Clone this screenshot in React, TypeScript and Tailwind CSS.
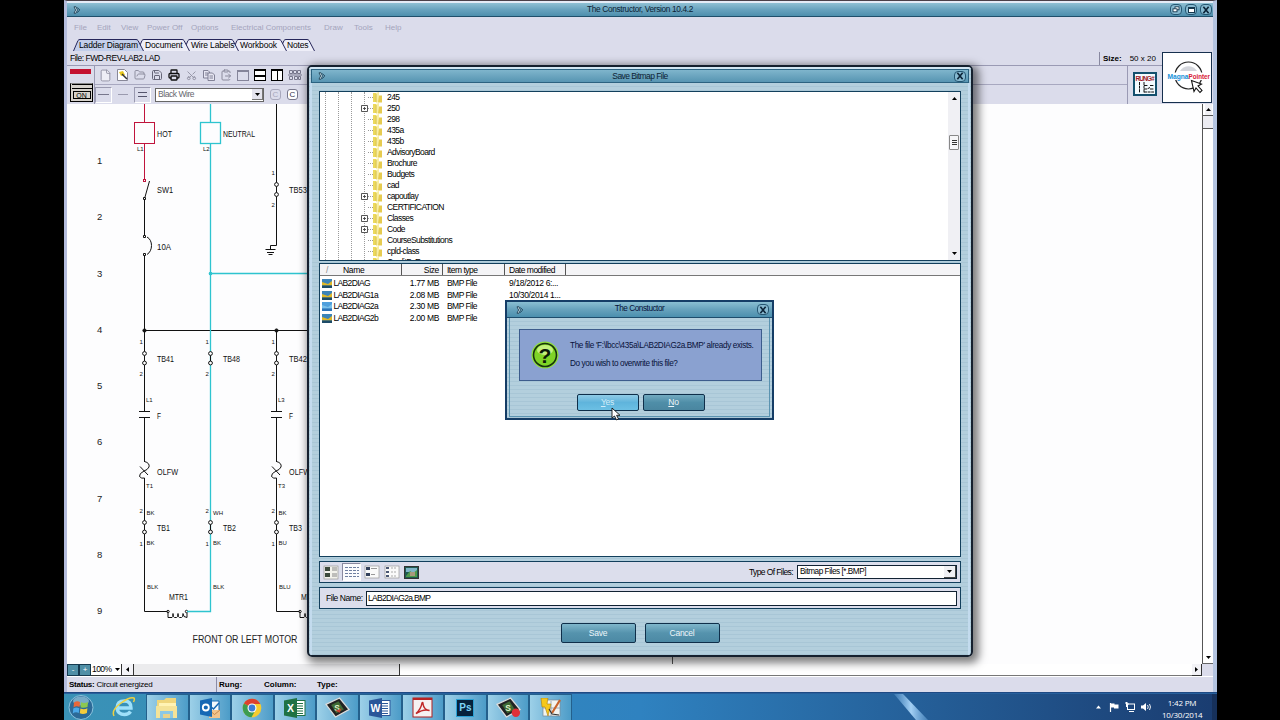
import React from 'react';
import { Copy, ClipboardPaste, FolderOpen, Printer, Save, Scissors, File } from 'lucide-react';

const MENU = [
  { label: 'File', cls: 'w-[23px]' },
  { label: 'Edit', cls: 'w-[24px]' },
  { label: 'View', cls: 'w-[26px]' },
  { label: 'Power Off', cls: 'w-[44px]' },
  { label: 'Options', cls: 'w-[40px]' },
  { label: 'Electrical Components', cls: 'w-[93px]' },
  { label: 'Draw', cls: 'w-[30px]' },
  { label: 'Tools', cls: 'w-[31px]' },
  { label: 'Help', cls: 'w-[30px]' },
];

const TABS = [
  { label: 'Ladder Diagram', w: 71, cls: 'w-[69px] z-5' },
  { label: 'Document', w: 53, cls: 'w-[46px] z-4' },
  { label: 'Wire Labels', w: 56, cls: 'w-[49px] z-3' },
  { label: 'Workbook', w: 55, cls: 'w-[47px] z-2' },
  { label: 'Notes', w: 36, cls: 'w-[31px] z-1' },
];

const FOLDERS = [
  { name: '245' },
  { name: '250', plus: true },
  { name: '298' },
  { name: '435a' },
  { name: '435b' },
  { name: 'AdvisoryBoard' },
  { name: 'Brochure' },
  { name: 'Budgets' },
  { name: 'cad' },
  { name: 'capoutlay', plus: true },
  { name: 'CERTIFICATION' },
  { name: 'Classes', plus: true },
  { name: 'Code', plus: true },
  { name: 'CourseSubstitutions' },
  { name: 'cpld-class' },
  { name: 'CreditByExam' },
];

const FILES = [
  { name: 'LAB2DIAG', size: '1.77 MB', date: '9/18/2012 6:...' },
  { name: 'LAB2DIAG1a', size: '2.08 MB', date: '10/30/2014 1...' },
  { name: 'LAB2DIAG2a', size: '2.30 MB', date: '', selected: true },
  { name: 'LAB2DIAG2b', size: '2.00 MB', date: '' },
];

const Chevrons = () => (
  <svg width="8" height="8" viewBox="0 0 8 8" fill="#d8ecf4" stroke="#1d3f55" strokeWidth="0.9">
    <path d="M1 .8 L3 .8 L4.4 4 L3 7.2 L1 7.2 L2.6 4Z" />
    <path d="M4.2 1.4 L6.8 4 L4.2 6.6" fill="none" />
  </svg>
);

const CloseButton = () => (
  <div className="w-[12px] h-[11px] rounded-[4px] border border-[#245672] bg-[#86b9d0] flex items-center justify-center">
    <svg width="8" height="8" viewBox="0 0 7 7" stroke="#0c2438" strokeWidth="1.4">
      <path d="M1.2 .6 L5.8 6.4 M5.8 .6 L1.2 6.4" />
    </svg>
  </div>
);

const Arrow = ({ dir }: { dir: 'up' | 'down' | 'left' | 'right' }) => {
  const d = {
    up: 'M1 5 L3.5 2 L6 5Z',
    down: 'M1 2 L3.5 5 L6 2Z',
    left: 'M5 1 L2 3.5 L5 6Z',
    right: 'M2 1 L5 3.5 L2 6Z',
  }[dir];
  return <svg width="7" height="7" viewBox="0 0 7 7" className="shrink-0"><path d={d} fill="#000" /></svg>;
};

const TitleBar = () => (
  <div className="h-[14px] shrink-0 flex items-center bg-linear-to-b from-[#8fc0d4] via-[#69a3be] to-[#4d8fad] border-b border-[#1f4f6b] text-[#0c2233]">
    <div className="w-[43px] pl-[6px]"><Chevrons /></div>
    <div className="flex-1 text-center text-[8.3px] tracking-[-0.35px]">The Constructor, Version 10.4.2</div>
    <div className="w-[43px] flex gap-[3px]">
      <div className="w-[12px] h-[11px] rounded-[4px] border border-[#245672] bg-[#86b9d0] flex items-center justify-center">
        <svg width="8" height="7" viewBox="0 0 8 7" fill="#fff" stroke="#16384e" strokeWidth="0.9">
          <rect x="3" y="0.8" width="4" height="3" /><rect x="1" y="2.8" width="4" height="3" />
        </svg>
      </div>
      <div className="w-[12px] h-[11px] rounded-[4px] border border-[#245672] bg-[#86b9d0] flex items-center justify-center">
        <div className="w-[7px] h-[6px] bg-white border border-t-2 border-[#16384e]"></div>
      </div>
      <CloseButton />
    </div>
  </div>
);

const TabStrip = () => (
  <div className="h-[14px] flex pl-[6px] text-[8.5px] tracking-[-0.15px] text-black isolate">
    {TABS.map((tab, i) => (
      <div key={tab.label} className={`${tab.cls} relative h-[14px]`}>
        <svg width={tab.w} height="13" className={`absolute top-0 ${i === 0 ? 'left-0' : '-left-[5px]'}`}>
          <path
            d={`M0.5 13 L5 2.5 Q5.6 1.5 7 1.5 H${tab.w - 8} Q${tab.w - 6.6} 1.5 ${tab.w - 6} 2.5 L${tab.w - 0.5} 13`}
            fill={i === 0 ? '#c3cfeb' : '#eeeef8'}
            stroke="#26265a"
          />
        </svg>
        <span className={`relative block whitespace-nowrap leading-[14px] ${i === 0 ? 'pl-[6px]' : 'pl-[3px]'}`}>{tab.label}</span>
      </div>
    ))}
  </div>
);

const ToolCell = ({ children }: { children?: React.ReactNode }) => (
  <div className="w-[17.2px] h-[18px] flex items-center justify-center text-[#8a8a9c]">{children}</div>
);

const Toolbar = () => (
  <div className="h-[39px] flex border-t border-[#9a9ab4]">
    <div className="w-[28px] border-r border-[#9a9ab4] pl-[3px] pt-[3px]">
      <div className="w-[21px] h-[5px] bg-[#c41230]"></div>
      <div className="mt-[9px] w-[23px] h-[19px] bg-[#d6d2cc] border border-black border-t-[#888] flex flex-col items-center">
        <div className="w-[20px] h-[5px] border-b border-black border-t"></div>
        <div className="mt-[2px] w-[18px] h-[8px] border border-black text-[7px] leading-[7px] text-center">ON</div>
      </div>
    </div>
    <div className="flex-1">
      <div className="h-[19px] flex items-center pl-[2px] border-b border-[#a8a8c0]">
        <ToolCell><File size={13} strokeWidth={1.6} fill="#eeeef6" /></ToolCell>
        <ToolCell>
          <svg width="11" height="12" viewBox="0 0 11 12">
            <path d="M.5 .5 H7.5 L10.5 3.5 V11.5 H.5Z" fill="#fff" stroke="#888898" />
            <path d="M2 3 L6 2 L8 6 L4 7Z" fill="#e8c81e" />
            <path d="M5 5 L10 10" stroke="#333" strokeWidth="1.5" />
          </svg>
        </ToolCell>
        <ToolCell><FolderOpen size={12} strokeWidth={1.9} /></ToolCell>
        <ToolCell><Save size={12} strokeWidth={2} color="#666678" /></ToolCell>
        <ToolCell><Printer size={12} strokeWidth={2.6} color="#111" /></ToolCell>
        <ToolCell><Scissors size={11} strokeWidth={1.8} className="-rotate-90" /></ToolCell>
        <ToolCell>
          <svg width="12" height="11" viewBox="0 0 12 11" fill="#e6e6f2" stroke="#77778c" strokeWidth="0.9">
            <path d="M.5 .5 H5 L6.500 2 V8 H.500Z M2 3h3 M2 5h3" />
            <path d="M5 3 H9.500 L11.500 5 V10.500 H5Z M6.500 6h3.500 M6.500 8h3.500" />
          </svg>
        </ToolCell>
        <ToolCell><ClipboardPaste size={12} strokeWidth={2} /></ToolCell>
        <ToolCell><div className="w-[12px] h-[11px] border border-[#85859a] border-t-2"></div></ToolCell>
        <ToolCell>
          <div className="w-[12px] h-[12px] border border-black border-t-2 bg-white flex items-center"><div className="w-full h-[2px] bg-black"></div></div>
        </ToolCell>
        <ToolCell>
          <div className="w-[12px] h-[12px] border border-black border-t-2 bg-white flex justify-center"><div className="w-px h-full bg-black"></div></div>
        </ToolCell>
        <ToolCell>
          <svg width="14" height="12" viewBox="0 0 14 12" fill="none" stroke="#77778c">
            <path d="M1.5 1.5h3v3h-3z M5.5 1.5h3v3h-3z M9.5 1.5h3v3h-3z M1.5 7.5h3v3h-3z M6.5 7.5h3v3h-3z M10.5 7.5h2v3h-2z M0 6h14" />
          </svg>
        </ToolCell>
      </div>
      <div className="h-[19px] flex items-center">
        <div className="w-[17px] h-[16px] border border-[#9a9ab0] border-r-white border-b-white flex items-center justify-center"><div className="w-[11px] h-px bg-[#77778c]"></div></div>
        <div className="w-[22px] flex pl-[6px]"><div className="w-[10px] h-px bg-[#9a9aae]"></div></div>
        <div className="w-[17px] h-[16px] border border-[#9a9ab0] border-r-white border-b-white flex flex-col gap-[3px] items-center justify-center">
          <div className="w-[9px] h-px bg-[#55556c]"></div>
          <div className="w-[9px] h-px bg-[#55556c]"></div>
        </div>
        <div className="ml-[4px] w-[109px] h-[14px] bg-white border border-[#666] flex items-center justify-between text-[8.5px] tracking-[-0.45px] text-[#66666e] pl-[2px]">
          <span>Black Wire</span>
          <div className="w-[11px] h-[11px] bg-[#e4e4ee] border-r border-b border-[#777] flex items-center justify-center"><Arrow dir="down" /></div>
        </div>
        <div className="ml-[6px] w-[11px] h-[11px] rounded-[3px] border border-[#a8a8bc] text-[#a8a8bc] text-[8px] leading-[9px] text-center">C</div>
        <div className="ml-[6px] w-[11px] h-[11px] rounded-[3px] border border-[#77778c] bg-white text-[#33334c] text-[8px] leading-[9px] text-center">C</div>
      </div>
    </div>
    <div className="w-[35px] border-l border-[#9a9ab4] flex items-start justify-center pt-[6px]">
      <svg width="24" height="24" viewBox="0 0 24 24">
        <rect x="1" y="1" width="22" height="22" fill="#f4fbff" stroke="#14506e" strokeWidth="2" />
        <text x="2.6" y="9" fontSize="6.5" fontWeight="bold" fill="#a01a2c" textLength="19" fontFamily="Liberation Sans">RUNG#</text>
        <path d="M6.5 10 V21 M11 10 V21 M11 13.5 H15 M17 13.5 H21 M11 17 H14 L17 15.5 M17 17 H21 M11 20 H21" stroke="#111" strokeWidth="1" strokeDasharray="3 0.6" fill="none" />
      </svg>
    </div>
  </div>
);

const MagnaPointer = () => (
  <div className="w-[50px] h-[51px] mt-[1px] mr-[1px] bg-white border border-[#16304e]">
    <svg width="48" height="49" viewBox="0 0 48 49">
      <circle cx="25.5" cy="22.5" r="13.5" fill="#fff" stroke="#222" strokeWidth="1.2" />
      <path d="M17 18 A10 10 0 0 1 34 18 Z" fill="#d4d6dc" />
      <rect x="4" y="19.5" width="43" height="7.500" fill="#fff" />
      <text x="4.500" y="26" fontSize="7.2" fontWeight="bold" fontFamily="Liberation Sans" fill="#1590d8" textLength="21" lengthAdjust="spacingAndGlyphs">Magna</text>
      <text x="25.500" y="26" fontSize="7.2" fontWeight="bold" fontFamily="Liberation Sans" fill="#d81834" textLength="21.500" lengthAdjust="spacingAndGlyphs">Pointer</text>
      <path d="M28.5 27.500 L38.5 31 L35 33 L39 37.500 L37 39.500 L33 35 L31 38.500Z" fill="#fff" stroke="#111" strokeWidth="1.1" />
    </svg>
  </div>
);

const Terminal = ({ x, y, gap = 10 }: { x: number; y: number; gap?: number }) => (
  <g fill="#fff" stroke="#111">
    <path d={`M${x} ${y} V${y + gap}`} />
    <circle cx={x} cy={y} r="1.9" />
    <circle cx={x} cy={y + gap} r="1.9" />
  </g>
);

const Overload = ({ x }: { x: number }) => (
  <path
    d={`M${x} 461.5 Q${x + 5.5} 463 ${x + 4.5} 467 Q${x + 3} 470 ${x - 0.5} 471 Q${x - 5.5} 473.5 ${x - 5} 476.5 Q${x - 3} 479 ${x} 478 M${x - 4.5} 466.5 L${x + 3.5} 475`}
    fill="none"
    stroke="#111"
  />
);

const Coil = ({ x }: { x: number }) => (
  <g fill="none" stroke="#111">
    <path d={`M${x} 613 V617.5 H${x + 4} Q${x + 5} 617.5 ${x + 5} 613.5 Q${x + 5} 617.5 ${x + 6.5} 617.5 H${x + 8.5} Q${x + 10} 617.5 ${x + 10} 613.5 Q${x + 10} 617.500 ${x + 11.500} 617.500 H${x + 13.500} Q${x + 15} 617.500 ${x + 15} 613.500 Q${x + 15} 617.500 ${x + 19} 617.500 V613`} />
    <circle cx={x} cy="611.5" r="1.2" />
    <circle cx={x + 18.5} cy="611.5" r="1.2" />
  </g>
);

const Phase = ({ x }: { x: number }) => (
  <g stroke="#111" fill="none">
    <path d={`M${x} 330 V411 M${x - 5.5} 411.5 H${x + 5.5} M${x - 5.5} 417.5 H${x + 5.5} M${x} 418 V462 M${x} 478 V611.5 H${x + 23}`} />
    <circle cx={x} cy="330.5" r="1.6" fill="#111" />
    <Overload x={x} />
    <Terminal x={x} y={353.5} gap={9.5} />
    <Terminal x={x} y={522.5} gap={9.5} />
    <Coil x={x + 23.5} />
  </g>
);

const LABELS: [number, number, string, number][] = [
  [157, 137, 'HOT', 15], [223, 137, 'NEUTRAL', 32], [157, 193, 'SW1', 16], [289, 193, 'TB53', 18],
  [157, 249.5, '10A', 14], [157, 362, 'TB41', 17], [223, 362, 'TB48', 17], [289, 362, 'TB42', 18],
  [157, 418.5, 'F', 4], [289, 418.5, 'F', 4], [157, 475, 'OLFW', 21], [289, 475, 'OLFW', 21],
  [157, 531, 'TB1', 13], [223, 531, 'TB2', 13], [289, 531, 'TB3', 13],
  [169, 599.5, 'MTR1', 19], [301, 599.5, 'MTR2', 19],
];

const SMALL: [number, number, string][] = [
  [137, 150.5, 'L1'], [203, 150.5, 'L2'], [271.5, 174.5, '1'], [271.5, 207, '2'],
  [139.5, 344, '1'], [205.5, 344, '1'], [271.5, 344, '1'],
  [139.5, 376, '2'], [205.5, 376, '2'], [271.5, 376, '2'],
  [146, 402, 'L1'], [278, 402, 'L3'], [146, 488, 'T1'], [278, 488, 'T3'],
  [139.5, 513, '2'], [205.5, 513, '2'], [271.5, 513, '2'],
  [146.5, 515, 'BK'], [213, 515, 'WH'], [278.5, 515, 'BK'],
  [139.5, 545.5, '1'], [205.5, 545.5, '1'], [271.5, 545.5, '1'],
  [146.5, 544.5, 'BK'], [213, 544.5, 'BK'], [278.5, 544.5, 'BU'],
  [147, 588.5, 'BLK'], [213, 588.5, 'BLK'], [279, 588.5, 'BLU'],
];

const Ladder = () => (
  <svg width="1135" height="560" viewBox="67 104 1135 560" className="block" fontFamily="Liberation Sans">
    <g fontSize="9.5" fill="#222">
      {[1, 2, 3, 4, 5, 6, 7, 8, 9].map((n) => (
        <text key={n} x="97" y={107.6 + n * 56.3}>{n}</text>
      ))}
    </g>
    <g fill="none" stroke="#c0143c">
      <path d="M144.5 104 V122.5 M144.5 143.5 V179" />
      <rect x="134.5" y="122.5" width="20" height="21" />
      <rect x="143.5" y="179.5" width="2" height="2" />
    </g>
    <g fill="none" stroke="#111">
      <path d="M149.5 181 L145 197 M144.5 199 V235 M144.5 256 V330 M147 237 C153 240 153 251 147 254.5" />
      <path d="M143.5 197.500h2v2h-2z M143.500 235.500h2v2h-2z M143.500 253.500h2v2h-2z" />
      <path d="M276.500 104 V245.500 H270.500 V249 M265.500 249.500 H275.500 M267 252.500 H274 M268.500 254.500 H272.500" />
      <path d="M144 330.500 H308" />
    </g>
    <Terminal x={276.5} y={184.5} />
    <Phase x={144.5} />
    <Phase x={276.5} />
    <g fill="none" stroke="#2ec4cf" strokeWidth="1.3">
      <path d="M210.500 104 V122.500 M210.500 143.500 V611.500 H187 M210.500 273.500 H308" />
      <rect x="200.500" y="122.500" width="20" height="21" />
      <circle cx="210.500" cy="273.500" r="1.2" fill="#2ec4cf" />
    </g>
    <Terminal x={210.5} y={353.5} gap={9.5} />
    <Terminal x={210.5} y={522.5} gap={9.5} />
    <g fontSize="8.500" fill="#111">
      {LABELS.map(([x, y, s, w]) => (
        <text key={`${x}-${y}`} x={x} y={y} textLength={w} lengthAdjust="spacingAndGlyphs">{s}</text>
      ))}
    </g>
    <g fontSize="6" fill="#111">
      {SMALL.map(([x, y, s]) => (
        <text key={`${x}-${y}`} x={x} y={y}>{s}</text>
      ))}
    </g>
    <text x="192.500" y="642.500" fontSize="10" fill="#222" textLength="105" lengthAdjust="spacingAndGlyphs">FRONT OR LEFT MOTOR</text>
    <path d="M672.500 655 V664" stroke="#555" />
  </svg>
);

const FolderIcon = () => (
  <svg width="9" height="11" viewBox="0 0 9 11" className="shrink-0">
    <path d="M0 1 H4 V10 H0Z" fill="#ecd95c" />
    <path d="M3 1 L6 0 V10 L3 11Z" fill="#f8eea0" />
    <path d="M6 3.500 H9 V10.500 H5Z" fill="#e6cb50" />
    <path d="M3.200 2 V10" stroke="#c8ac3a" strokeWidth="0.6" />
  </svg>
);

const FolderTree = () => (
  <div className="h-[170px] bg-white border border-[#123f5c] flex overflow-hidden shrink-0">
    <div className="w-[6px] border-r border-dotted border-[#9a9a9a]"></div>
    <div className="w-[13px] border-r border-dotted border-[#9a9a9a]"></div>
    <div className="w-[13px] border-r border-dotted border-[#9a9a9a]"></div>
    <div className="w-[13px] border-r border-dotted border-[#9a9a9a]"></div>
    <div className="flex-1 text-[8.500px] text-black">
      {FOLDERS.map((f) => (
        <div key={f.name} className="h-[11px] flex items-center -ml-[4px]">
          <div className="w-[7px] h-[7px] shrink-0 flex">
            {f.plus && (
              <svg width="7" height="7" viewBox="0 0 7 7"><path d="M.5 .5h6v6h-6z M2 3.500h3 M3.500 2v3" fill="#fff" stroke="#444" strokeWidth="0.900" /></svg>
            )}
          </div>
          <div className="w-[5px] border-t border-dotted border-[#999]"></div>
          <FolderIcon />
          <span className="ml-[5px] tracking-[-0.580px] leading-[11px] whitespace-nowrap">{f.name}</span>
        </div>
      ))}
    </div>
    <div className="w-[12px] bg-[#f0f0f4] flex flex-col items-center py-[3px]">
      <Arrow dir="up" />
      <div className="mt-[33px] w-[10px] h-[15px] bg-[#f6f6f8] border border-[#888] rounded-[1px] flex flex-col items-center justify-center gap-px">
        <div className="w-[5px] h-px bg-[#333]"></div>
        <div className="w-[5px] h-px bg-[#333]"></div>
        <div className="w-[5px] h-px bg-[#333]"></div>
      </div>
      <div className="flex-1"></div>
      <Arrow dir="down" />
    </div>
  </div>
);

const FileList = () => (
  <div className="mt-[2px] h-[294px] shrink-0 bg-white border border-[#123f5c] text-[8.500px] tracking-[-0.350px] text-black">
    <div className="h-[12px] flex leading-[12px] bg-[#f4f4f6] border-b border-[#777]">
      <div className="w-[82px] border-r border-[#555] flex"><span className="w-[23px] pl-[6px] text-[#888]">/</span>Name</div>
      <div className="w-[41px] border-r border-[#555] text-right pr-[3px]">Size</div>
      <div className="w-[62px] border-r border-[#555] pl-[4px] tracking-[-0.500px]">Item type</div>
      <div className="w-[61px] border-r border-[#555] pl-[4px] tracking-[-0.500px] whitespace-nowrap">Date modified</div>
    </div>
    <div className="pt-[1.500px]">
      {FILES.map((f) => (
        <div key={f.name} className="h-[11.700px] flex items-center leading-[11px]">
          <div className="w-[82px] flex items-center pl-[2px]">
            <svg width="10" height="9" viewBox="0 0 10 9">
              <rect width="10" height="9" fill={f.selected ? '#4f9fdc' : '#3c84b8'} />
              <path d="M0 3 L6 5 L10 2 V6.500 H0Z" fill={f.selected ? '#7ac0ea' : '#e0b828'} />
              <path d="M0 6.500 H10 V9 H0Z" fill={f.selected ? '#2d74b8' : '#1d4c68'} />
            </svg>
            <span className="ml-[1.500px] tracking-[-0.650px]">{f.name}</span>
          </div>
          <div className="w-[40px] text-right pr-[3px]">{f.size}</div>
          <div className="w-[62px] pl-[5px] tracking-[-0.550px]">BMP File</div>
          <div className="pl-[5px]">{f.date}</div>
        </div>
      ))}
    </div>
  </div>
);

const ViewIcons = () => (
  <div className="flex items-center gap-[2px]">
    <svg width="18" height="16" viewBox="0 0 18 16">
      <rect x="2" y="2" width="14" height="13" fill="#f2f2ec" stroke="#999" strokeWidth="0.700" />
      <path d="M3 3h5v4h-5z M3 9h5v4h-5z" fill="#3c4a3c" />
      <path d="M10 4h5 M10 6h5 M10 10h5 M10 12h5" stroke="#888" />
    </svg>
    <div className="w-[19px] h-[18px] border border-[#8a8aa0] border-r-white border-b-white bg-[#fbfbfd] flex items-center justify-center">
      <svg width="14" height="13" viewBox="0 0 14 13"><path d="M0 1.500h14 M0 4.500h14 M0 7.500h14 M0 10.500h14" stroke="#6f7fa0" strokeDasharray="3 1" /></svg>
    </div>
    <svg width="18" height="16" viewBox="0 0 18 16">
      <rect x="2" y="2" width="14" height="12" fill="#fafafa" stroke="#999" strokeWidth="0.700" />
      <path d="M3 3h4v3h-4z M3 9h4v3h-4z" fill="#33405c" /><path d="M8 4.500h6 M8 10.500h4" stroke="#999" />
    </svg>
    <svg width="18" height="16" viewBox="0 0 18 16">
      <rect x="2" y="2" width="14" height="12" fill="#fafafa" stroke="#999" strokeWidth="0.700" />
      <path d="M3 3h3v2h-3z M3 7h3v2h-3z M3 11h3v2h-3z" fill="#4a5674" /><path d="M8 4h6 M8 8h6 M8 12h6" stroke="#aaa" strokeDasharray="2 1" />
    </svg>
    <svg width="18" height="16" viewBox="0 0 18 16">
      <rect x="1.500" y="2.500" width="14" height="12" fill="#1f5a50" stroke="#333" />
      <rect x="3" y="4" width="11" height="4" fill="#7fb4c8" />
      <path d="M3 12 L7 7 L10 9 L14 6 V13 H3Z" fill="#4e9a4a" />
      <rect x="7" y="8" width="5" height="4" fill="#a89a7c" />
    </svg>
  </div>
);

const DialogButton = ({ children, className }: { children: React.ReactNode; className: string }) => (
  <div className={`border border-[#0f2f4a] rounded-[2px] text-[#eef6fa] text-[8.500px] tracking-[-0.250px] flex items-center justify-center ${className}`}>
    {children}
  </div>
);

const SaveDialog = () => (
  <div className="absolute left-[307px] top-[65px] w-[666px] h-[592px] rounded-[5px] border-2 border-[#15202e] bg-[repeating-linear-gradient(180deg,#b3cfdd_0px,#b3cfdd_3px,#a8c6d6_3px,#a8c6d6_4px)] shadow-[3px_3px_9px_3px_rgba(0,0,0,0.5)] flex flex-col overflow-hidden">
    <div className="h-[2px] bg-[#d2e6f2] shrink-0"></div>
    <div className="mx-[2px] h-[14px] shrink-0 flex items-center border border-[#2b6280] bg-linear-to-b from-[#7fb5cc] to-[#5795b2] text-[#0c2233]">
      <div className="w-[30px] pl-[6px]"><Chevrons /></div>
      <div className="flex-1 text-center text-[8.500px] tracking-[-0.550px]">Save Bitmap File</div>
      <div className="w-[30px] flex justify-end pr-[2px]"><CloseButton /></div>
    </div>
    <div className="flex-1 mx-[1px] border-x-2 border-[#c3dbee] px-[7px] pt-[8px] flex flex-col">
      <FolderTree />
      <FileList />
      <div className="mt-[4px] h-[22px] shrink-0 border border-[#123f5c] bg-[#dcdeec] flex items-center justify-between pl-[2px] pr-[3px] text-[8.500px] tracking-[-0.600px]">
        <ViewIcons />
        <div className="flex items-center gap-[4px]">
          <span>Type Of Files:</span>
          <div className="w-[160px] h-[14px] border border-[#123] bg-white flex items-center justify-between pl-[2px] text-[8.200px] tracking-[-0.450px]">
            <span>Bitmap Files [*.BMP]</span>
            <div className="w-[12px] h-[12px] bg-[#f0f0f4] border-r border-b border-[#444] flex items-center justify-center"><Arrow dir="down" /></div>
          </div>
        </div>
      </div>
      <div className="mt-[4px] h-[22px] shrink-0 border border-[#123f5c] bg-[#dcdeec] flex items-center pl-[6px] pr-[3px] text-[8.500px] tracking-[-0.450px]">
        <span className="w-[40px]">File Name:</span>
        <div className="flex-1 h-[15px] border border-[#123] bg-white flex items-center pl-[1px] tracking-[-0.680px]">LAB2DIAG2a.BMP</div>
      </div>
      <div className="mt-[14px] flex gap-[9px] justify-center">
        <DialogButton className="w-[75px] h-[20px] bg-linear-to-b from-[#7fb6cb] via-[#5593ad] to-[#4c89a4]">Save</DialogButton>
        <DialogButton className="w-[75px] h-[20px] bg-linear-to-b from-[#7fb6cb] via-[#5593ad] to-[#4c89a4]">Cancel</DialogButton>
      </div>
    </div>
  </div>
);

const ConfirmDialog = () => (
  <div className="absolute left-[505px] top-[300px] w-[269px] h-[120px] border-2 border-[#153d66] bg-[repeating-linear-gradient(180deg,#b3cfdd_0px,#b3cfdd_3px,#a8c6d6_3px,#a8c6d6_4px)] text-[#08123a] text-[8.200px]">
    <div className="h-[16px] flex items-center border-b border-[#1d4c6c] bg-linear-to-b from-[#8abfd2] via-[#67a2bc] to-[#4b8fae]">
      <div className="w-[30px] pl-[9px]"><Chevrons /></div>
      <div className="flex-1 text-center tracking-[-0.450px]">The Constuctor</div>
      <div className="w-[30px] flex justify-end pr-[3px]"><CloseButton /></div>
    </div>
    <div className="mx-[2px] h-[99px] border-x border-b border-[#5a93b0] pl-[9px] pr-[7px] pt-[11px]">
      <div className="h-[52px] bg-[#8aa1d0] border border-[#3c5c8c] flex items-center">
        <div className="w-[50px] flex justify-center">
          <svg width="28" height="28" viewBox="0 0 28 28">
            <circle cx="14" cy="14" r="13.500" fill="#8fe03c" />
            <circle cx="14" cy="14" r="11.500" fill="#7fd426" stroke="#17340c" strokeWidth="1.600" />
            <ellipse cx="14" cy="9" rx="8" ry="5" fill="#c4f27c" />
            <text x="14" y="21.500" textAnchor="middle" fontSize="21" fontWeight="bold" fontFamily="Liberation Sans" fill="#0c1a08">?</text>
          </svg>
        </div>
        <div className="leading-[18px] whitespace-nowrap">
          <p className="tracking-[-0.360px]">The file 'F:\lbcc\435a\LAB2DIAG2a.BMP' already exists.</p>
          <p className="tracking-[-0.400px]">Do you wish to overwrite this file?</p>
        </div>
      </div>
      <div className="mt-[13px] flex gap-[4px] justify-center">
        <DialogButton className="w-[62px] h-[17px] bg-linear-to-b from-[#8fcbe6] via-[#5fb4dc] to-[#6cc0e4]"><span className="text-[#d0ecf8]"><u>Y</u>es</span></DialogButton>
        <DialogButton className="w-[62px] h-[17px] bg-linear-to-b from-[#72aac0] via-[#4f8ea8] to-[#4a86a0]"><span><u>N</u>o</span></DialogButton>
      </div>
    </div>
    <svg width="11" height="15" viewBox="0 0 11 15" className="absolute left-[104px] top-[105px]">
      <path d="M1 1 V11 L3.500 9 L5.500 13 L7.500 12 L5.600 8.300 H9Z" fill="#fff" stroke="#111" strokeWidth="0.900" />
    </svg>
  </div>
);

const TaskButton = ({ children }: { children: React.ReactNode }) => (
  <div className="w-[42.600px] h-[26px] border border-[#24608c] border-b-0 bg-linear-to-r from-[#9cd0e8] to-[#4c9cc8] flex items-center justify-center">{children}</div>
);

const OfficeIcon = ({ letter, color }: { letter: string; color: string }) => (
  <svg width="22" height="20" viewBox="0 0 22 20">
    <rect x="10" y="2.500" width="11" height="15" fill="#fff" stroke={color} />
    <path d="M13 5.500h6 M13 8h6 M13 10.500h6 M13 13h6 M13 15.500h6" stroke={color} strokeWidth="1.200" />
    <path d="M0 2.500 L13 0 V20 L0 17.500Z" fill={color} />
    <text x="6.500" y="14" textAnchor="middle" fontSize="10.500" fontWeight="bold" fill="#fff" fontFamily="Liberation Sans">{letter}</text>
  </svg>
);

const CamtasiaIcon = ({ rec }: { rec?: boolean }) => (
  <svg width="29" height="21" viewBox="0 0 26 20">
    <path d="M2 7 L15 1 L24 12 L11 19Z" fill="#222" stroke="#ddd" strokeWidth="1.200" />
    <path d="M7 7.500 L14 4 L19 12 L12 15.500Z" fill="#3f6a34" />
    <text x="10" y="13" fontSize="8" fontWeight="bold" fill="#dff0c8" fontFamily="Liberation Sans">S</text>
    {rec ? <circle cx="20" cy="15" r="4" fill="#e03038" /> : <path d="M11 13 L17 11 L15 15Z" fill="#c84030" />}
  </svg>
);

const Taskbar = () => (
  <div className="h-[27px] shrink-0 flex items-end border-t border-[#28609c] overflow-hidden bg-linear-to-r from-[#3a92b6] via-[#2f82c0] to-[#1a3c70]">
    <div className="w-[34px] h-[26px] flex justify-center">
      <svg width="28" height="26" viewBox="0 0 28 26">
        <circle cx="14" cy="13.500" r="12" fill="#2c6a98" stroke="#8cc4de" />
        <ellipse cx="14" cy="7" rx="8" ry="4.500" fill="#78acc8" />
        <path d="M7 8.500 Q10 6.500 13 8 L12.500 13 Q9.500 11.500 6.500 13.500Z" fill="#e8673a" />
        <path d="M14 8.300 Q17.500 10 21 8 L20.500 13 Q17 14.500 13.500 13.200Z" fill="#8cc850" />
        <path d="M6.300 14.500 Q9 12.700 12.300 14.200 L11.800 19 Q8.500 17.500 5.800 19.500Z" fill="#4aa8e8" />
        <path d="M13.400 14.400 Q17 16 20.400 14.200 L19.900 19 Q16 20.800 12.800 19.200Z" fill="#f6cc3c" />
      </svg>
    </div>
    <div className="w-[48px] h-[26px] flex items-center justify-center pl-[4px]">
      <svg width="24" height="24" viewBox="0 0 24 24" fill="none">
        <path d="M5 13 H19 Q19 6 12.500 6 Q5 6 5 13.500 Q6 19.500 12.500 19.500 Q16.500 19.500 18.500 16.500" stroke="#9fe0fa" strokeWidth="3.400" />
        <path d="M2 21 Q-1 15 9 8 Q18 1.500 22 3 Q23 4 21.500 7" stroke="#f0d040" strokeWidth="1.500" />
      </svg>
    </div>
    <TaskButton>
      <svg width="24" height="22" viewBox="0 0 24 22">
        <path d="M2 3 H9 L11 1 H21 V21 H2Z" fill="#efd67c" />
        <path d="M4 6 H21 V11 H4Z" fill="#fff3b4" />
        <path d="M1 9 H22 V21 H1Z" fill="#f4e398" />
        <path d="M5 14 H18 V21 H5Z" fill="#8cc8e4" /><path d="M8 17 H15 V21 H8Z" fill="#e9d28a" />
      </svg>
    </TaskButton>
    <TaskButton>
      <svg width="22" height="22" viewBox="0 0 22 22">
        <path d="M10 4 H20 V17 H10Z" fill="#f4f8fc" stroke="#1668b4" />
        <path d="M10 8 L14.500 12 L20 6" fill="none" stroke="#1668b4" strokeWidth="1.500" />
        <path d="M10 13 H21 V21 H10Z" fill="#f2c38c" /><path d="M10 13 L15.500 17.500 L21 13" fill="none" stroke="#c4884c" />
        <path d="M1 3.500 L13 1 V20 L1 17.500Z" fill="#1668b4" />
        <circle cx="6.800" cy="10.500" r="3" fill="none" stroke="#fff" strokeWidth="1.800" />
      </svg>
    </TaskButton>
    <TaskButton>
      <svg width="20" height="20" viewBox="0 0 20 20">
        <circle cx="10" cy="10" r="9.300" fill="#f5cc30" />
        <path d="M10 10 L1.900 5.400 A9.300 9.300 0 0 1 18.300 6 L10 6Z" fill="#dc4030" />
        <path d="M1.900 5.400 A9.300 9.300 0 0 0 9.500 19.300 L13.500 12 L10 10Z" fill="#3c9c50" />
        <circle cx="10" cy="10" r="4.500" fill="#fff" /><circle cx="10" cy="10" r="3.400" fill="#3c7cd8" />
      </svg>
    </TaskButton>
    <TaskButton><OfficeIcon letter="X" color="#1f7244" /></TaskButton>
    <TaskButton><CamtasiaIcon /></TaskButton>
    <TaskButton><OfficeIcon letter="W" color="#2a5699" /></TaskButton>
    <TaskButton>
      <svg width="21" height="21" viewBox="0 0 21 21">
        <rect x="1" y="1" width="19" height="19" fill="#f6f2f2" stroke="#b02020" strokeWidth="1" />
        <rect x="1" y="1" width="19" height="2" fill="#b82424" />
        <path d="M4 16.500 Q9 12 10 6 Q11 4.500 11 7 Q12 13 17.500 13.500 Q12 11.500 4 16.500Z" fill="none" stroke="#c02828" strokeWidth="1.500" />
      </svg>
    </TaskButton>
    <TaskButton>
      <div className="w-[18px] h-[18px] bg-[#06223c] border border-[#2aa0d4] text-[#7cd4f8] font-bold text-[10px] leading-[16px] text-center">Ps</div>
    </TaskButton>
    <TaskButton><CamtasiaIcon rec /></TaskButton>
    <TaskButton>
      <svg width="22" height="20" viewBox="0 0 22 20">
        <rect x="3" y="2" width="17" height="16" fill="#f2f4f0" stroke="#789" strokeWidth="0.700" />
        <path d="M11 3 V18 M3 10 H20" stroke="#89a" strokeWidth="0.800" />
        <path d="M1 0 H8 L7 6 H11 L8 18 L5 9 H2Z" fill="#f6c81c" stroke="#a88010" strokeWidth="0.600" />
        <path d="M20 2 L12 15" stroke="#c8642c" strokeWidth="2.200" /><path d="M9 11 L12 16 L19 17" fill="none" stroke="#333" strokeWidth="1.200" />
      </svg>
    </TaskButton>
    <div className="flex-1 h-[26px] flex">
      <svg width="60" height="26" viewBox="0 0 60 26" className="ml-[310px]">
        <defs><linearGradient id="streak" x1="0" y1="0" x2="1" y2="0"><stop offset="0" stopColor="#78b4e8" stopOpacity="0.300" /><stop offset="0.500" stopColor="#a4d0f4" /><stop offset="1" stopColor="#78b4e8" stopOpacity="0.400" /></linearGradient></defs>
        <path d="M12 0 H21 L46 26 H34Z" fill="url(#streak)" />
      </svg>
    </div>
    <div className="w-[66px] h-[26px] flex items-center gap-[6px] text-white">
      <svg width="5" height="4" viewBox="0 0 5 4" className="shrink-0"><path d="M0 3.500 L2.500 .5 L5 3.500Z" fill="#fff" /></svg>
      <svg width="10" height="10" viewBox="0 0 10 10" className="ml-[2px] shrink-0"><path d="M1.500 1 V10" stroke="#fff" strokeWidth="1.200" /><path d="M2 1.500 H5.500 V2.500 H9.500 V6.500 H5 V5.500 H2Z" fill="#fff" /></svg>
      <svg width="10" height="10" viewBox="0 0 10 10" className="shrink-0" fill="none" stroke="#fff"><rect x="2.500" y="2" width="7" height="5.500" /><path d="M0 1 H3 V3 M1.500 0 V5 M4 9.500 H9" /></svg>
      <svg width="11" height="10" viewBox="0 0 11 10" className="shrink-0"><path d="M0 3.500 H2 L5 1 V9 L2 6.500 H0Z" fill="#fff" /><path d="M6.500 3 Q8 5 6.500 7 M8.500 2 Q10.500 5 8.500 8" fill="none" stroke="#fff" strokeWidth="0.900" /></svg>
    </div>
    <div className="w-[50px] h-[26px] pr-[10px] text-center text-white whitespace-nowrap font-['Open_Sans',sans-serif] text-[8px] leading-[11.500px] pt-[3px] tracking-[-0.200px]">
      <div>1:42 PM</div>
      <div>10/30/2014</div>
    </div>
    <div className="w-[5px] h-[26px] bg-[#16305a]"></div>
  </div>
);

export default function App() {
  return (
    <div className="w-[1280px] h-[720px] bg-black overflow-hidden relative font-['Liberation_Sans',Arial,sans-serif] flex justify-start pl-[64px]">
      <div className="w-[1153px] h-[720px] flex flex-col bg-[#1e4a84]">
        <div className="h-[692px] shrink-0 mb-[1px] border-t border-[#4a4048] border-r-[4px] border-l-[3px] border-r-[#b4c4e0] border-l-[#b4bcdc] bg-[#dbdceb] flex flex-col">
          <div className="h-[2px] bg-[#e4ebf6] shrink-0"></div>
          <TitleBar />
          <div className="h-[21px] shrink-0 flex items-center pl-[7px] text-[8px] text-[#a4a4bc]">
            {MENU.map((m) => (
              <div key={m.label} className={`${m.cls} whitespace-nowrap`}>{m.label}</div>
            ))}
          </div>
          <div className="h-[66px] shrink-0 flex">
            <div className="flex-1 flex flex-col">
              <TabStrip />
              <div className="h-[13px] flex items-center text-[8.500px] tracking-[-0.480px] pl-[3px] text-black">
                <div className="flex-1"><span className="font-medium">File: </span>FWD-REV-LAB2.LAD</div>
                <div className="w-[63px] h-[13px] border-l border-[#8888a0] flex items-center gap-[8px] pl-[3px] text-[8px] tracking-normal">
                  <b>Size:</b><span>50 x 20</span>
                </div>
              </div>
              <Toolbar />
            </div>
            <div className="w-[51px] pt-[13px]"><MagnaPointer /></div>
          </div>
          <div className="h-[560px] shrink-0 flex border-b border-[#666]">
            <div className="w-[1135px] h-[560px] bg-[#fdfdfe] overflow-hidden"><Ladder /></div>
            <div className="w-[11px] bg-white border-l border-[#555] flex flex-col items-center">
              <div className="h-[11px] flex items-center bg-[#f0f0f4]"><Arrow dir="up" /></div>
              <div className="w-full h-[14px] border-y border-[#555] bg-[#ececf2]"></div>
              <div className="flex-1"></div>
              <div className="h-[11px] flex items-center"><Arrow dir="down" /></div>
            </div>
          </div>
          <div className="h-[12px] shrink-0 flex">
            <div className="w-[12px] bg-[#4f8fa6] border border-[#153a50] text-white text-[8px] leading-[9px] text-center">-</div>
            <div className="w-[12px] bg-[#4f8fa6] border border-[#153a50] text-white text-[8px] leading-[9px] text-center">+</div>
            <div className="w-[31px] bg-white border-r border-b border-[#333] flex items-center justify-between text-[8.500px] tracking-[-0.600px] pl-px"><span>100%</span><Arrow dir="down" /></div>
            <div className="w-[12px] bg-[#f4f4f8] border-r border-b border-[#333] flex items-center justify-center"><Arrow dir="left" /></div>
            <div className="w-[266px] bg-[#ebebed] border-r border-b border-[#333]"></div>
            <div className="flex-1 bg-white border-b border-[#777]"></div>
            <div className="w-[10px] bg-[#f2f2f6] border-r border-b border-[#333] flex items-center justify-center"><Arrow dir="right" /></div>
            <div className="w-[11px]"></div>
          </div>
          <div className="flex-1 border-t border-white flex items-center text-[8px] text-black">
            <div className="w-[150px] h-full flex items-center pl-[2px] border-r border-[#8c8ca6] whitespace-pre tracking-[-0.240px]"><b>Status: </b>Circuit energized</div>
            <b className="w-[47px] pl-[2px]">Rung:</b>
            <b className="w-[53px]">Column:</b>
            <b>Type:</b>
          </div>
        </div>
        <Taskbar />
      </div>
      <SaveDialog />
      <ConfirmDialog />
    </div>
  );
}
